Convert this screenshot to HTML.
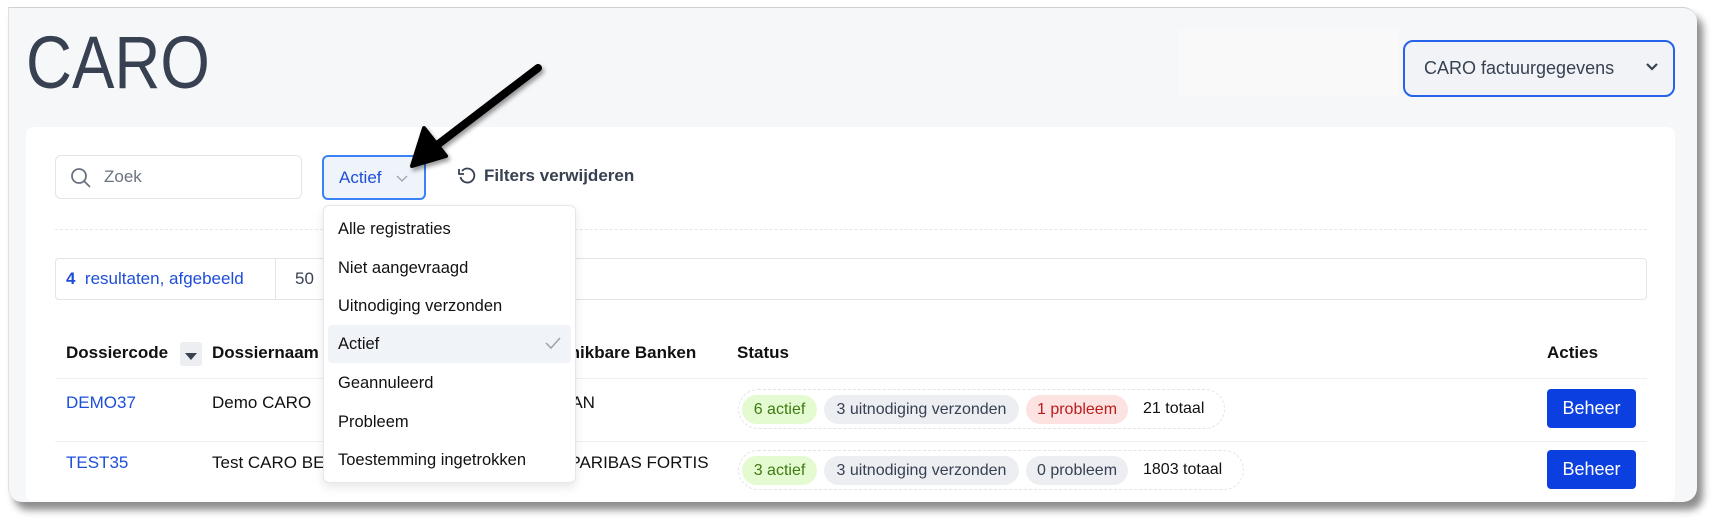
<!DOCTYPE html>
<html><head><meta charset="utf-8"><style>
*{box-sizing:border-box;margin:0;padding:0}
body{width:1722px;height:526px;background:#fff;font-family:"Liberation Sans",sans-serif;position:relative;overflow:hidden;color:#111}
.abs{position:absolute}
.outer{left:8px;top:7px;width:1689px;height:495px;background:#f6f7f9;border-radius:0 14px 14px 14px;border-top:1px solid #cfd0d3;border-left:1px solid #e0e1e4;box-shadow:6px 8px 8px rgba(0,0,0,.45)}
.caro{left:26px;top:20px;font-size:74px;color:#374151;transform:scaleX(0.86);transform-origin:0 0}
.pale{left:1179px;top:29px;width:219px;height:67px;background:#f9f9fa}
.sel{left:1403px;top:40px;width:272px;height:57px;border:2px solid #2563eb;border-radius:10px;background:#f1f3f6;font-size:18px;color:#374151;padding:16px 0 0 19px}
.card{left:26px;top:127px;width:1649px;height:375px;background:#fff;border-radius:8px}
.search{left:55px;top:155px;width:247px;height:44px;border:1px solid #e2e4e8;border-radius:6px;font-size:17px;color:#6b7280;padding:11px 0 0 48px}
.actb{left:322px;top:155px;width:104px;height:45px;border:2px solid #3b82f6;border-radius:6px;background:#eff3fa;color:#1d4ed8;font-size:17px;padding:11px 0 0 15px}
.filt{left:458px;top:166px;font-size:17px;color:#374151;font-weight:bold}
.dash{left:55px;top:229px;width:1592px;border-top:1px dashed #e5e7eb}
.res{left:55px;top:258px;width:1592px;height:42px;border:1px solid #e2e4e8;border-radius:4px}
.th{top:343px;font-size:17px;font-weight:bold}
.td{font-size:17px}
.line{left:55px;width:1592px;border-top:1px solid #eef0f3}
.pillbox{left:738px;width:487px;height:40px;border:1px dashed #e2e4e8;border-radius:20px}
.pill{height:29px;border-radius:15px;font-size:16px;padding:6px 0 0 0;text-align:center}
.g{background:#e4fbd1;color:#3f7a12}.gr{background:#eceef2;color:#374151}.r{background:#fde2e2;color:#b91c1c}
.btn{left:1547px;width:89px;height:39px;background:#0b3fe0;color:#fff;border-radius:4px;font-size:18px;text-align:center;padding-top:9px}
.dd{left:323px;top:205px;width:253px;height:278px;background:#fff;border:1px solid #e5e7eb;border-radius:6px;box-shadow:0 4px 10px rgba(0,0,0,.1)}
.it{left:338px;font-size:16.5px;color:#111}
</style></head><body>
<div class="abs outer"></div>
<div class="abs caro">CARO</div>
<div class="abs pale"></div>
<div class="abs sel">CARO factuurgegevens<svg class="abs" style="left:240px;top:20px" width="14" height="10" viewBox="0 0 14 10"><path d="M2 2l5 5 5-5" stroke="#374151" stroke-width="2.2" fill="none"/></svg></div>
<div class="abs card"></div>
<div class="abs search"><svg class="abs" style="left:14px;top:11px" width="22" height="22" viewBox="0 0 22 22"><circle cx="9" cy="9" r="7" stroke="#6b7280" stroke-width="1.8" fill="none"/><path d="M14 14l6 6" stroke="#6b7280" stroke-width="1.8"/></svg>Zoek</div>
<div class="abs actb">Actief<svg class="abs" style="left:72px;top:18px" width="12" height="8" viewBox="0 0 12 8"><path d="M1 1l5 5 5-5" stroke="#9ca3af" stroke-width="1.3" fill="none"/></svg></div>
<svg class="abs" style="left:457px;top:166px" width="20" height="20" viewBox="0 0 20 20"><path d="M5 5A7 7 0 1 1 3.5 11" stroke="#374151" stroke-width="1.8" fill="none"/><path d="M2 3v5h5" stroke="#374151" stroke-width="1.8" fill="none"/></svg>
<div class="abs filt" style="left:484px">Filters verwijderen</div>
<div class="abs dash"></div>
<div class="abs res"><span class="abs" style="left:10px;top:10px;font-size:17px;color:#1d4ed8"><b>4</b>&nbsp; resultaten, afgebeeld</span><div class="abs" style="left:219px;top:0;height:40px;border-left:1px solid #e2e4e8"></div><span class="abs" style="left:239px;top:10px;font-size:17px;color:#374151">50</span></div>
<div class="abs th" style="left:66px">Dossiercode</div>
<div class="abs" style="left:180px;top:342px;width:22px;height:24px;background:#eceef2;border-radius:3px"><svg class="abs" style="left:5px;top:11px" width="12" height="7"><path d="M0 0h12L6 7z" fill="#374151"/></svg></div>
<div class="abs th" style="left:212px">Dossiernaam</div>
<div class="abs th" style="left:529px">Beschikbare Banken</div>
<div class="abs th" style="left:737px">Status</div>
<div class="abs th" style="left:1547px">Acties</div>
<div class="abs line" style="top:378px"></div>
<div class="abs td" style="left:66px;top:393px;color:#1d4ed8">DEMO37</div>
<div class="abs td" style="left:212px;top:393px">Demo CARO</div>
<div class="abs td" style="left:560px;top:393px">BAN</div>
<div class="abs pillbox" style="top:389px"></div>
<div class="abs pill g" style="left:742px;top:395px;width:75px">6 actief</div>
<div class="abs pill gr" style="left:824px;top:395px;width:195px">3 uitnodiging verzonden</div>
<div class="abs pill r" style="left:1026px;top:395px;width:102px">1 probleem</div>
<div class="abs td" style="left:1143px;top:400px;font-size:16px">21 totaal</div>
<div class="abs btn" style="top:389px">Beheer</div>
<div class="abs line" style="top:441px"></div>
<div class="abs td" style="left:66px;top:453px;color:#1d4ed8">TEST35</div>
<div class="abs td" style="left:212px;top:453px">Test CARO BE</div>
<div class="abs td" style="left:530px;top:453px">BNP PARIBAS FORTIS</div>
<div class="abs pillbox" style="top:450px;width:506px"></div>
<div class="abs pill g" style="left:742px;top:456px;width:75px">3 actief</div>
<div class="abs pill gr" style="left:824px;top:456px;width:195px">3 uitnodiging verzonden</div>
<div class="abs pill gr" style="left:1026px;top:456px;width:102px">0 probleem</div>
<div class="abs td" style="left:1143px;top:461px;font-size:16px">1803 totaal</div>
<div class="abs btn" style="top:450px">Beheer</div>
<div class="abs dd"></div>
<div class="abs it" style="top:220px">Alle registraties</div>
<div class="abs it" style="top:259px">Niet aangevraagd</div>
<div class="abs it" style="top:297px">Uitnodiging verzonden</div>
<div class="abs" style="left:328px;top:325px;width:243px;height:38px;background:#f0f3f7;border-radius:4px"></div>
<div class="abs it" style="top:335px">Actief</div>
<svg class="abs" style="left:545px;top:336px" width="16" height="14" viewBox="0 0 16 14"><path d="M1 7l5 5L15 2" stroke="#9ca3af" stroke-width="1.5" fill="none"/></svg>
<div class="abs it" style="top:374px">Geannuleerd</div>
<div class="abs it" style="top:413px">Probleem</div>
<div class="abs it" style="top:451px">Toestemming ingetrokken</div>
<svg class="abs" style="left:400px;top:55px;filter:drop-shadow(2px 3px 2px rgba(0,0,0,.4))" width="150" height="125" viewBox="400 55 150 125"><path d="M538 68L428 152" stroke="#000" stroke-width="8" stroke-linecap="round"/><path d="M412 166L424 128L446 156Z" fill="#000" stroke="#000" stroke-width="4" stroke-linejoin="round"/></svg>
</body></html>
